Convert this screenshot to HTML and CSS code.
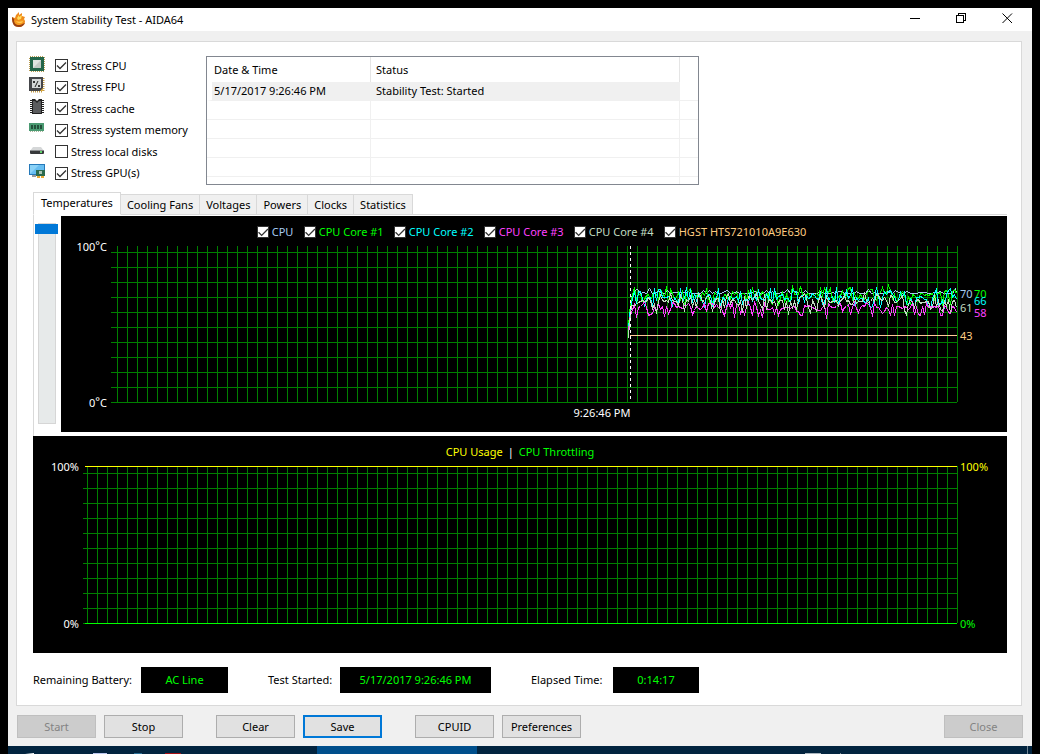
FILE: index.html
```html
<!DOCTYPE html>
<html lang="en">
<head>
<meta charset="utf-8">
<title>System Stability Test - AIDA64</title>
<link rel="stylesheet" href="styles.css">
</head>
<body>
<main class="window">
  <header class="titlebar">
    <svg class="app-icon" viewBox="0 0 16 16" width="16" height="16" aria-hidden="true">
      <path d="M1 5 L4 6 L5 3 L8 0 L8 3 L11 1 L11 4 L14 5 L13 7 L14 9 C14 13 11 15 8 15 C3 15 1 11 1 5 Z" fill="#ef8a1c"/>
      <path d="M1 5 C1 12 3 15 8 15 C11 15 13 13 14 11 C10 13 4 12 3 7Z" fill="#9a4012"/>
      <path d="M3 8 C5 9 9 9 13 7 C13 12 10 13 8 13 C5 13 3 11 3 8Z" fill="#f79a1e"/>
      <path d="M6 6 L8 3 L8 5 L11 3 L10 7 L7 8Z" fill="#ffdc5a"/>
      <path d="M5 9 C7 10 9 10 12 9 C11 12 7 12 5 9Z" fill="#ffcb52"/>
    </svg>
    <h1 class="title">System Stability Test - AIDA64</h1>
    <div class="caption-buttons">
      <button class="caption" aria-label="Minimize"><svg width="11" height="11" viewBox="0 0 11 11"><path d="M0 5.500H10"/></svg></button>
      <button class="caption" aria-label="Restore"><svg width="11" height="11" viewBox="0 0 11 11"><path d="M.5 2.500H7.500V9.500H.5ZM2.500 2.500V.5H9.500V7.500H7.500"/></svg></button>
      <button class="caption" aria-label="Close window"><svg class="smooth" width="11" height="11" viewBox="0 0 11 11"><path d="M.5 .5L10 10M10 .5L.5 10"/></svg></button>
    </div>
  </header>

  <section class="panel">
    <div class="top">
      <ul class="stress">
        <li>
          <svg width="16" height="16" viewBox="0 0 16 16"><rect x="1" y="1" width="14" height="14" fill="none" stroke="#b89a50" stroke-width="2" stroke-dasharray="1 1"/><rect x="1" y="1" width="14" height="14" fill="#23664a"/><rect x="4" y="4" width="8" height="8" fill="#dfe4e1"/><path d="M4 12L12 4V12Z" fill="#c3cac6"/></svg>
          <label><input type="checkbox" checked>Stress CPU</label>
        </li>
        <li>
          <svg width="16" height="16" viewBox="0 0 16 16"><path d="M14.500 1V15M2 14.500H14" stroke="#c29a48" stroke-width="2" stroke-dasharray="1 1"/><rect width="14" height="14" fill="#45464a"/><rect x="3" y="2" width="9" height="9" fill="#d5d7d8"/><path d="M9 4L6 10" fill="none" stroke="#222"/><path d="M4 4h2v2h-2zM9 8h2v2h-2z" fill="#333"/><path d="M11 14h3v-3z" fill="#e0ad3c"/></svg>
          <label><input type="checkbox" checked>Stress FPU</label>
        </li>
        <li>
          <svg width="16" height="16" viewBox="0 0 16 16"><path d="M2.500 1V15M13.500 1V15" stroke="#222" stroke-width="3" stroke-dasharray="1 1"/><path d="M3 0H6L8 2L10 0H13V15H3Z" fill="#222"/><path d="M4 2H6L8 4L10 2H12V14H4Z" fill="#5b5c5e"/></svg>
          <label><input type="checkbox" checked>Stress cache</label>
        </li>
        <li>
          <svg width="16" height="16" viewBox="0 0 16 16"><rect x="0" y="3" width="15" height="8" fill="#4b9a72"/><path d="M2 5h2v4H2zM5 5h2v4H5zM8 5h2v4H8zM11 5h2v4h-2z" fill="#24503b"/><path d="M1 11.500H15" stroke="#a7b59a" stroke-dasharray="1 1"/></svg>
          <label><input type="checkbox" checked>Stress system memory</label>
        </li>
        <li>
          <svg width="16" height="16" viewBox="0 0 16 16"><path d="M4 5H12L15 9H1Z" fill="#d5d7d8"/><rect x="1" y="8" width="14" height="4" rx="1" fill="#37393b"/><path d="M1 8.500H15" stroke="#8d9092"/><rect x="11" y="9" width="2" height="2" fill="#5fd36a"/></svg>
          <label><input type="checkbox">Stress local disks</label>
        </li>
        <li>
          <svg width="16" height="16" viewBox="0 0 16 16"><rect x="0" y="1" width="16" height="11" fill="#2679b9"/><rect x="1" y="2" width="14" height="9" fill="#67bdf0"/><path d="M1 11L10 2H1Z" fill="#8bd2f7"/><path d="M3 13H7" stroke="#999" stroke-width="2"/><rect x="7" y="7" width="9" height="6" fill="#2b6b4e"/><rect x="10" y="8" width="3" height="3" fill="#a9c4b5"/><path d="M8 14H15" stroke="#e9aa35" stroke-width="2" stroke-dasharray="3 1"/></svg>
          <label><input type="checkbox" checked>Stress GPU(s)</label>
        </li>
      </ul>

      <div class="log">
        <table>
          <colgroup><col class="col-date"><col class="col-status"><col></colgroup>
          <thead><tr><th>Date &amp; Time</th><th>Status</th><th></th></tr></thead>
          <tbody>
            <tr class="selected"><td>5/17/2017 9:26:46 PM</td><td>Stability Test: Started</td><td></td></tr>
            <tr><td></td><td></td><td></td></tr>
            <tr><td></td><td></td><td></td></tr>
            <tr><td></td><td></td><td></td></tr>
            <tr><td></td><td></td><td></td></tr>
            <tr class="partial"><td></td><td></td><td></td></tr>
          </tbody>
        </table>
      </div>
    </div>

    <div class="tabs" role="tablist">
      <button class="tab active" role="tab" aria-selected="true">Temperatures</button>
      <button class="tab" role="tab">Cooling Fans</button>
      <button class="tab" role="tab">Voltages</button>
      <button class="tab" role="tab">Powers</button>
      <button class="tab" role="tab">Clocks</button>
      <button class="tab" role="tab">Statistics</button>
    </div>

    <div class="tab-body">
      <input class="slider" type="range" min="0" max="100" value="0" aria-label="Vertical zoom">
      <div class="chart">
        <div class="legend">
          <label class="cpu"><input type="checkbox" checked>CPU</label>
          <label class="core core1"><input type="checkbox" checked>CPU Core #1</label>
          <label class="core core2"><input type="checkbox" checked>CPU Core #2</label>
          <label class="core core3"><input type="checkbox" checked>CPU Core #3</label>
          <label class="core core4"><input type="checkbox" checked>CPU Core #4</label>
          <label class="disk"><input type="checkbox" checked>HGST HTS721010A9E630</label>
        </div>
        <svg class="plot" viewBox="61 240 946 192">
          <g id="temp-grid" class="grid"></g>
          <g id="temp-lines" class="series"></g>
          <path class="marker" d="M630.500 246V402"/>
          <g class="white">
            <text x="107" y="251" text-anchor="end">100<tspan dy="-2">°</tspan><tspan dy="2">C</tspan></text>
            <text x="107" y="407" text-anchor="end">0<tspan dy="-2">°</tspan><tspan dy="2">C</tspan></text>
            <text x="602" y="417" text-anchor="middle">9:26:46 PM</text>
          </g>
          <text class="cpu" x="960" y="298">70</text>
          <text class="core1" x="974" y="298">70</text>
          <text class="core2" x="974" y="305">66</text>
          <text class="core4" x="960" y="312">61</text>
          <text class="core3" x="974" y="317">58</text>
          <text class="disk" x="960" y="340">43</text>
        </svg>
      </div>
    </div>

    <div class="chart usage">
      <svg class="plot" viewBox="33 436 974 217">
        <g id="usage-grid" class="grid"></g>
        <path class="line yellow-line" d="M85 466.500H957"/>
        <path class="line green-line" d="M85 623.500H957"/>
        <text x="520" y="456" text-anchor="middle"><tspan class="yellow">CPU Usage</tspan><tspan class="white" dx="5">|</tspan><tspan class="core1" dx="5">CPU Throttling</tspan></text>
        <text class="white" x="79" y="471" text-anchor="end">100%</text>
        <text class="white" x="79" y="628" text-anchor="end">0%</text>
        <text class="yellow" x="960" y="471">100%</text>
        <text class="core1" x="960" y="628">0%</text>
      </svg>
    </div>

    <div class="status">
      <div class="field battery"><span>Remaining Battery:</span><output>AC Line</output></div>
      <div class="field started"><span>Test Started:</span><output>5/17/2017 9:26:46 PM</output></div>
      <div class="field elapsed"><span>Elapsed Time:</span><output>0:14:17</output></div>
    </div>
  </section>

  <footer class="actions">
    <div class="pair"><button disabled>Start</button><button>Stop</button></div>
    <div class="pair"><button>Clear</button><button class="default">Save</button></div>
    <div class="pair"><button>CPUID</button><button>Preferences</button></div>
    <button class="close" disabled>Close</button>
  </footer>
</main>
<div class="taskbar">
  <svg width="309" height="8" viewBox="8 746 309 8" aria-hidden="true">
    <path d="M25 754L34 753V754Z" fill="#fff"/>
    <rect x="93" y="753" width="14" height="1" fill="#b9c6ee"/>
    <rect x="134" y="753" width="8" height="1" fill="#2a6f96"/>
    <rect x="165" y="753" width="16" height="1" fill="#a80f14"/>
  </svg>
  <div class="task-active"></div>
  <svg class="tray" width="240" height="8" viewBox="792 746 240 8" aria-hidden="true">
    <rect x="805" y="753" width="16" height="1" fill="#a9b4bd"/>
    <rect x="840" y="753" width="1" height="1" fill="#7b8a96"/>
    <rect x="1027" y="746" width="1" height="8" fill="#6f8494"/>
  </svg>
</div>
<script src="charts.js"></script>
</body>
</html>
```
FILE: styles.css
```css
* { box-sizing: border-box; }

body {
  margin: 0;
  padding: 8px 8px 0;
  background: #000;
  color: #000;
  font: 11px/16px "Noto Sans", "Open Sans", sans-serif;
}

button, input, output { font: inherit; color: inherit; }

.window { background: #f0f0f0; }

.titlebar {
  display: flex;
  align-items: center;
  height: 23px;
  padding: 0 2px 0 3px;
  background: #fff;
}
.title { flex: 1; margin: 0 0 0 4px; font-size: 11px; font-weight: 400; }
.caption-buttons { display: flex; align-self: stretch; }
.caption {
  display: flex;
  align-items: center;
  justify-content: center;
  width: 46px;
  padding: 0 0 2px;
  border: 0;
  background: none;
}
.caption svg { fill: none; stroke: #000; shape-rendering: crispEdges; }
.caption .smooth { shape-rendering: auto; }

.panel {
  margin: 10px 10px 0 8px;
  padding: 12px 14px 12px 16px;
  border: 1px solid #d9d9d9;
  background: #fff;
}

.top { display: flex; gap: 16px; }
.stress {
  display: flex;
  flex-direction: column;
  width: 161px;
  margin: 1px 0 1px -4px;
  padding: 0;
  list-style: none;
}
.stress li { display: flex; flex: 1; align-items: center; gap: 10px; }
.stress svg { flex: none; margin-bottom: 4px; }
.stress label { display: flex; align-items: center; gap: 3px; white-space: nowrap; }

input[type="checkbox"] {
  flex: none;
  appearance: none;
  width: 13px;
  height: 13px;
  margin: 0;
  border: 1px solid #333;
  background: #fff;
}
input[type="checkbox"]:checked {
  background: #fff url("data:image/svg+xml,%3Csvg xmlns='http://www.w3.org/2000/svg' viewBox='0 0 11 11'%3E%3Cpath d='M1 5.500L4 8.500L10 2.500' fill='none' stroke='%23333' stroke-width='1.300'/%3E%3C/svg%3E") center / 11px 11px no-repeat;
}

.log {
  width: 493px;
  margin-top: 2px;
  border: 1px solid #828790;
}
.log table { width: 100%; table-layout: fixed; border-collapse: separate; border-spacing: 0; }
.col-date { width: 164px; }
.col-status { width: 309px; }
.log th, .log td { padding: 0 5px; text-align: left; font-weight: 400; }
.log th { height: 25px; border-right: 1px solid #e5e5e5; }
.log th:first-child { padding-left: 7px; }
.log th:last-child, .log td:last-child { border-right: 0; }
.log td { height: 19px; border-right: 1px solid #f0f0f0; border-bottom: 1px solid #f0f0f0; }
.log .selected td { background: #f0f0f0; }
.log .selected td:first-child { padding-left: 2px; border-left: 5px solid #fff; }
.log .selected td:last-child { background: none; }
.log .partial td { height: 7px; border-bottom: 0; }

.tabs { display: flex; align-items: flex-end; margin-top: 7px; box-shadow: inset 0 -1px #d9d9d9; }
.tab {
  height: 21px;
  padding: 0 6px;
  border: 1px solid #d9d9d9;
  border-left: 0;
  background: #f0f0f0;
  white-space: nowrap;
}
.tab.active {
  height: 23px;
  padding: 0 7px 2px;
  border-left: 1px solid #d9d9d9;
  border-bottom-color: #fff;
  background: #fff;
}
.tab-body {
  display: flex;
  gap: 3px;
  padding: 1px 0 4px 1px;
  border-left: 1px solid #d9d9d9;
}
.slider {
  appearance: none;
  writing-mode: vertical-lr;
  flex: none;
  width: 23px;
  height: 201px;
  margin: 7px 0 0;
  background: none;
}
.slider::-webkit-slider-runnable-track {
  width: 18px;
  height: 201px;
  border: 1px solid #d6d6d6;
  background: #e7eaea;
}
.slider::-webkit-slider-thumb {
  appearance: none;
  width: 23px;
  height: 10px;
  margin-left: -4px;
  background: #0078d7;
}

.chart { flex: 1; min-width: 0; background: #000; }
.plot { display: block; width: 100%; overflow: visible; font-size: 11px; }
.grid path { fill: none; stroke: #008000; shape-rendering: crispEdges; }
.series path { fill: none; shape-rendering: crispEdges; }
.line { shape-rendering: crispEdges; }
.yellow-line { stroke: #ff0; }
.green-line { stroke: #0f0; }
.marker { stroke: #fff; stroke-dasharray: 3 3; shape-rendering: crispEdges; }

.legend {
  display: flex;
  justify-content: center;
  height: 24px;
  padding: 7px 5px 0 0;
}
.legend label { display: flex; align-items: center; gap: 3px; white-space: nowrap; }
.legend input[type="checkbox"] { width: 12px; height: 12px; }
.legend .cpu { width: 47px; }
.legend .core { width: 90px; }

.cpu { color: #a6caf0; fill: #a6caf0; }
.core1 { color: #0f0; fill: #0f0; }
.core2 { color: #0ff; fill: #0ff; }
.core3 { color: #ff40ff; fill: #ff40ff; }
.core4 { color: #c0dcc0; fill: #c0dcc0; }
.disk { color: #ffcc80; fill: #ffcc80; }
.white { fill: #fff; }
.yellow { fill: #ff0; }

.status { display: flex; gap: 40px; margin-top: 14px; }
.field { display: flex; align-items: center; justify-content: space-between; white-space: nowrap; }
.field output {
  padding: 5px 0;
  background: #000;
  color: #0f0;
  text-align: center;
}
.battery { width: 195px; }
.started { width: 223px; }
.elapsed { width: 168px; }
.battery output { width: 87px; }
.started output { width: 151px; }
.elapsed output { width: 86px; }

.actions { display: flex; gap: 33px; padding: 9px 9px 8px; }
.pair { display: flex; gap: 8px; }
.actions button {
  width: 79px;
  height: 23px;
  padding: 0;
  border: 1px solid #adadad;
  background: #e1e1e1;
}
.actions button.default { border: 2px solid #0078d7; }
.actions button:disabled { border-color: #bfbfbf; background: #ccc; color: #838383; }
.actions .close { margin-left: auto; }

.taskbar { display: flex; height: 8px; background: #02243f; }
.task-active { width: 160px; background: #004f8c; }
.tray { margin-left: auto; }
```
FILE: charts.js
```js
const NS = "http://www.w3.org/2000/svg";

function addPath(group, d, stroke) {
  const path = document.createElementNS(NS, "path");
  path.setAttribute("d", d);
  if (stroke) path.setAttribute("stroke", stroke);
  group.appendChild(path);
}

function drawGrid(id, left, firstX, right, top, firstY, bottom) {
  let d = "";
  for (let x = firstX; x <= right; x += 10) d += `M${x + 0.5} ${top}V${bottom}`;
  for (let y = firstY; y <= bottom; y += 15) d += `M${left} ${y + 0.5}H${right}`;
  addPath(document.getElementById(id), d);
}

drawGrid("temp-grid", 111, 117, 957, 246, 252, 402);
drawGrid("usage-grid", 83, 87, 957, 466, 473, 623);

let seed = 64;
function random() {
  seed = (seed * 1103515245 + 12345) % 2147483648;
  return seed / 2147483648;
}

const START = 628, END = 956;
const group = document.getElementById("temp-lines");
const toY = (t) => Math.round(402 - t * 1.56) + 0.5;

// Each series ramps up from its idle temperature, then varies between
// base - down and base + up; small values near the base are more common.
function drawSeries(color, start, base, up, down, step, last) {
  let d = `M${START + 0.5} ${toY(start)}L${START + 1.5} ${toY(start + 10)}L${START + 3.5} ${toY(base - 3)}`;
  for (let x = START + 6; x < END; x += step) {
    const r = random() * 2 - 1;
    const t = base + (r > 0 ? r * r * up : -r * r * down);
    d += `L${x + 0.5} ${toY(t)}`;
  }
  d += `L${END + 0.5} ${toY(last)}`;
  addPath(group, d, color);
}

drawSeries("#a6caf0", 45, 70, 3, 0, 3, 70);
drawSeries("#00ff00", 48, 69, 6, 7, 2, 70);
drawSeries("#00ffff", 46, 67, 7, 7, 2, 66);
drawSeries("#ff40ff", 44, 61, 4, 7, 2, 58);
drawSeries("#c0dcc0", 41, 65, 5, 9, 2, 61);
addPath(group, `M${START + 2} ${toY(43)}H${END + 1}`, "#ffcc99");
```
